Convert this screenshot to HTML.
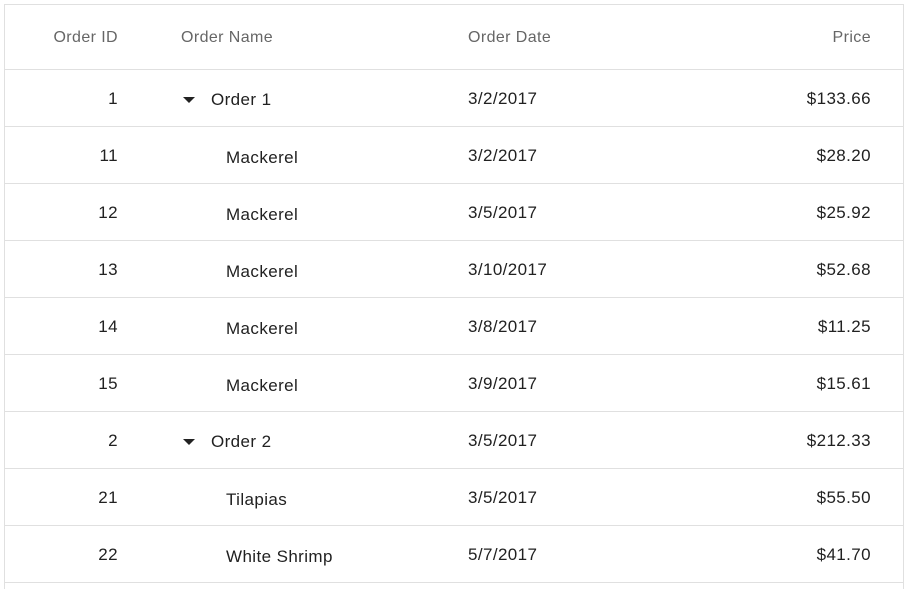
<!DOCTYPE html>
<html style="height:589px;overflow:hidden"><head><style>
body{margin:0;width:908px;height:589px;overflow:hidden;background:#fff;font-family:"Liberation Sans",Arial,sans-serif;position:relative;}
.g{position:absolute;left:4px;top:4px;width:898px;height:584px;border:1px solid #e0e0e0;border-bottom:none;overflow:hidden;}
.r{position:absolute;left:0;width:898px;border-bottom:1px solid #e0e0e0;}
.c{position:absolute;top:0;white-space:nowrap;font-size:17px;letter-spacing:0.4px;color:#212121;}
.h .c{color:#666;font-size:16px;letter-spacing:0.4px;}
.tri{position:absolute;width:0;height:0;border-left:6px solid transparent;border-right:6px solid transparent;border-top:6px solid #222;}
</style></head><body>
<div class="g">
<div class="r h" style="top:0;height:64px"><span class="c" style="right:785px;top:24px">Order ID</span><span class="c" style="left:176px;top:24px">Order Name</span><span class="c" style="left:463px;top:24px">Order Date</span><span class="c" style="right:32px;top:24px">Price</span></div>
</div>
<script>
const rows=[["1","Order 1","3/2/2017","$133.66",1],["11","Mackerel","3/2/2017","$28.20"],["12","Mackerel","3/5/2017","$25.92"],["13","Mackerel","3/10/2017","$52.68"],["14","Mackerel","3/8/2017","$11.25"],["15","Mackerel","3/9/2017","$15.61"],["2","Order 2","3/5/2017","$212.33",1],["21","Tilapias","3/5/2017","$55.50"],["22","White Shrimp","5/7/2017","$41.70"]];
let h="";rows.forEach((r,i)=>{const t=65+i*57;h+=`<div class="r" style="top:${t}px;height:56px"><span class="c" style="right:785px;top:19px">${r[0]}</span>${r[4]?`<span class="tri" style="left:178px;top:27px"></span><span class="c" style="left:206px;top:20px">${r[1]}</span>`:`<span class="c" style="left:221px;top:21px">${r[1]}</span>`}<span class="c" style="left:463px;top:19px">${r[2]}</span><span class="c" style="right:32px;top:19px">${r[3]}</span></div>`;});
document.querySelector('.g').insertAdjacentHTML('beforeend',h);
</script>
</body></html>
